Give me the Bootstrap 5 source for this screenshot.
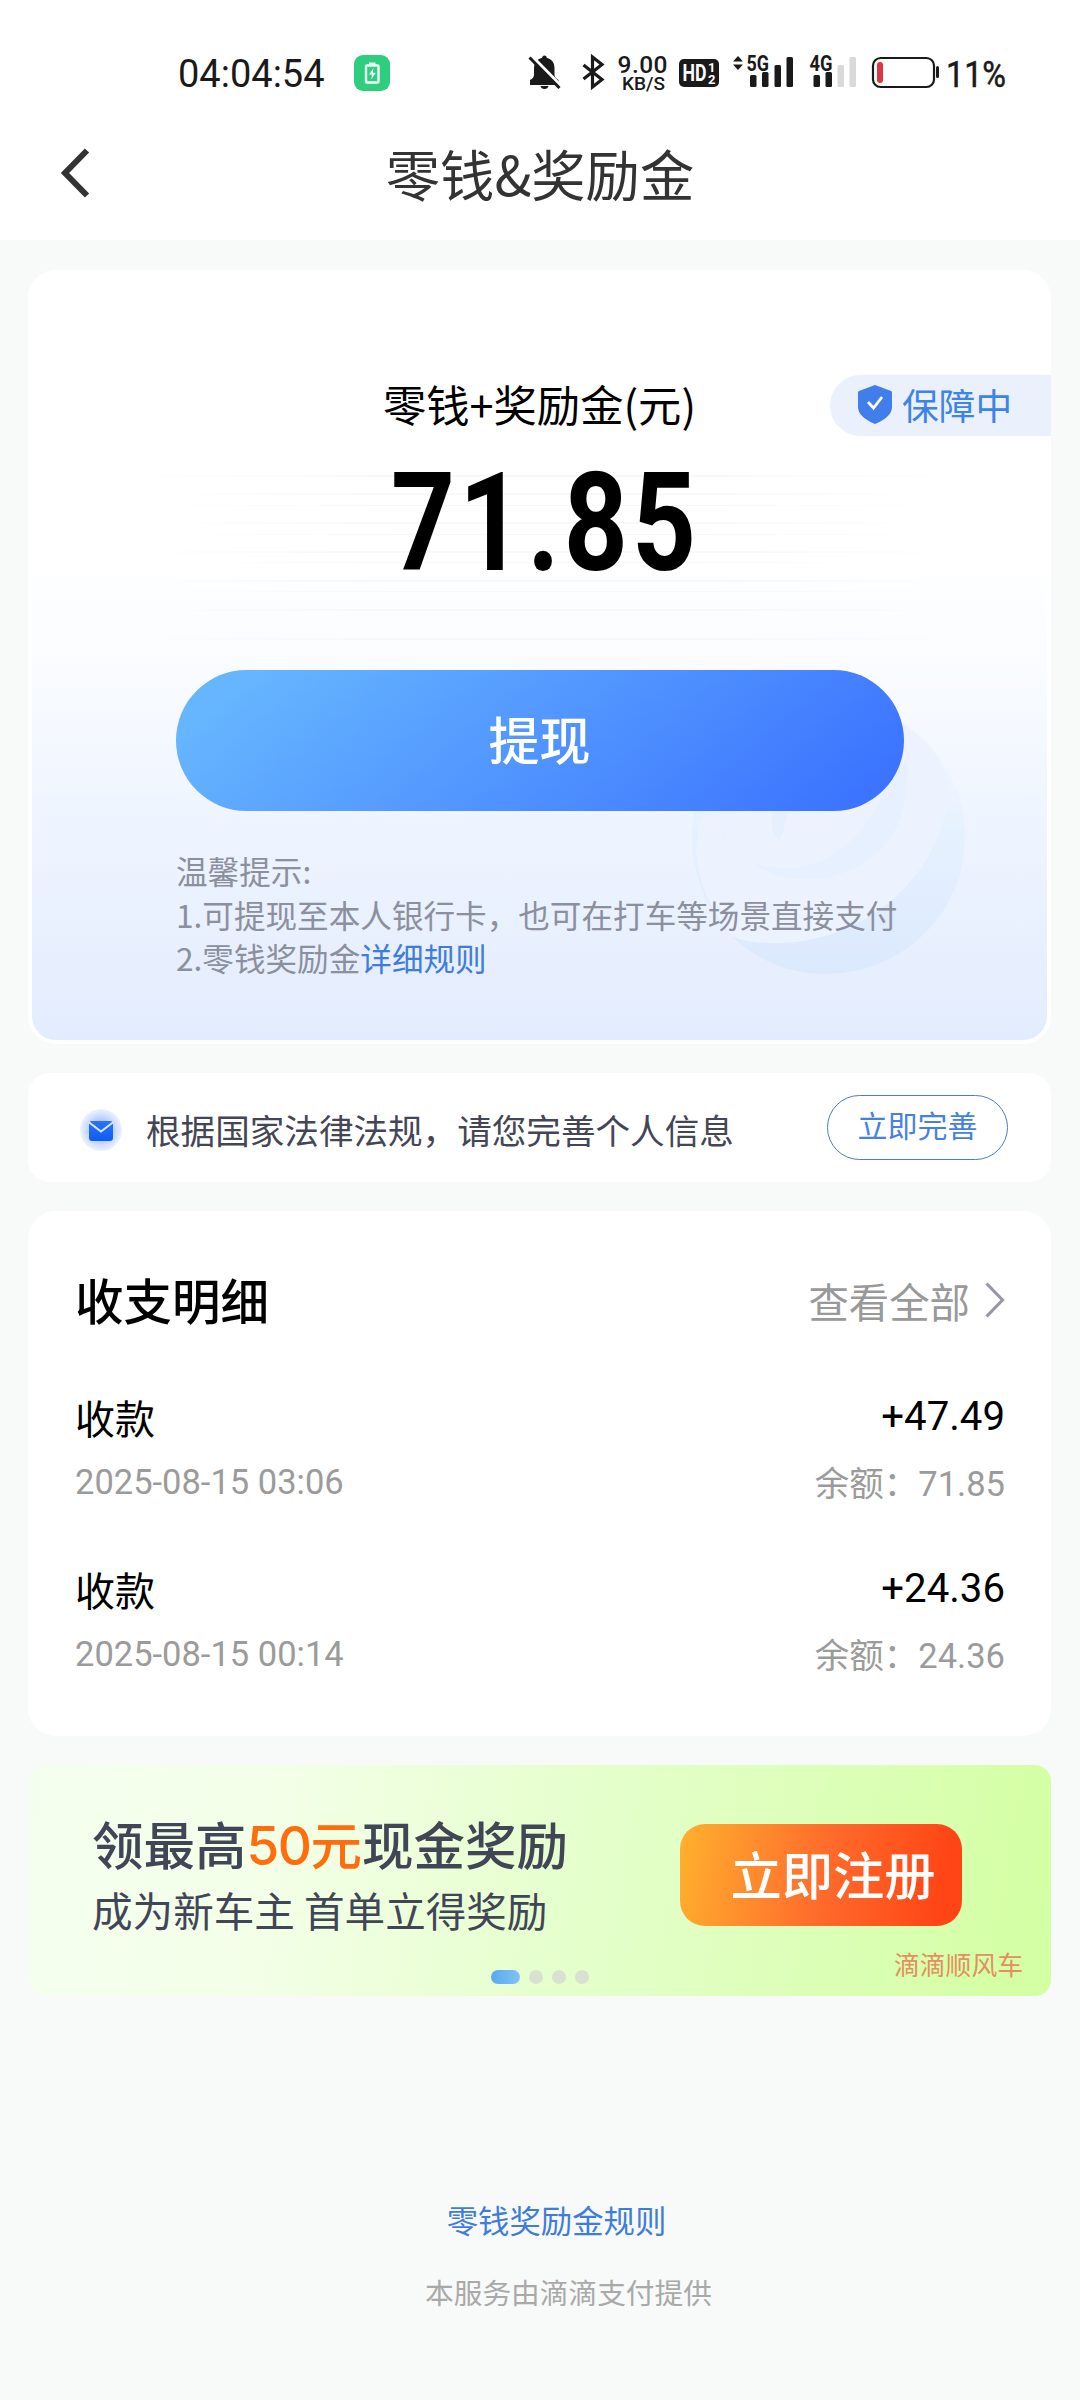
<!DOCTYPE html>
<html lang="zh-CN">
<head>
<meta charset="utf-8">
<meta name="viewport" content="width=device-width, initial-scale=1">
<title>零钱&amp;奖励金</title>
<link href="https://cdn.jsdelivr.net/npm/bootstrap@5.3.0/dist/css/bootstrap.min.css" rel="stylesheet">
<style>
body{background:#f8faf9;font-family:"Noto Sans CJK SC",sans-serif;color:#000;width:1080px;height:2400px;overflow:hidden}
.latin{font-family:Roboto,"Noto Sans CJK SC",sans-serif}
.topbar{height:240px}
.statusline{height:64px;margin-top:41px;color:#1a1a1a}
.clock{font-size:38px;line-height:64px;margin-left:178px;width:176px;padding-top:1px}
.page-title{font-size:54.3px;line-height:80px;color:#333;padding-top:8px}
.titlebar{height:100px;margin-top:20px}
.panel{background:#fff;margin:0 29px 0 28px;border-radius:28px}
.balance{height:774px;margin-top:30px;padding-top:99px;border:4px solid #fff;
 background:linear-gradient(180deg,#fff 0,#fff 36%,#fafcff 50%,#eff5ff 70%,#e3ecfe 100%)}
.caption-line{font-size:43.3px;line-height:60px}
.sum{font-size:138px;line-height:120px;height:120px;margin-top:30px;font-weight:700;letter-spacing:5px}
.sum span{display:inline-block;transform:scaleX(.81);padding-left:14px}
.guard{right:-4px;top:101px;width:221px;height:61px;border-radius:31px 0 0 31px;background:#ebf0fd;color:#3c83ea;font-size:36.7px;padding-left:27px;line-height:58px}
.withdraw{width:728px;height:141px;margin-top:87px;border:0;border-radius:71px;font-size:51px;font-weight:500;line-height:1;padding:0 0 5px;color:#fff;background:linear-gradient(140deg,#66b6ff 8%,#3b72ff 95%)}
.tips{width:760px;margin:38px 0 0 144px;font-size:31.6px;line-height:43.5px;color:#8c8f9d}
.tips a,.rules{color:#407ddb;text-decoration:none}
.swirl{left:650px;top:390px}
.rays{left:100px;top:190px}
.notice{height:109px;margin-top:29px;border-radius:22px;padding:0 43px 0 52px;color:#444655;font-size:34.6px}
.notice-text{padding:4px 0 0 24px}
.finish{width:181px;height:65px;border:1.5px solid #4c7cc4;border-radius:33px;font-size:30px;color:#4481e6;line-height:1;padding:0 0 7px;margin-bottom:1px}
.ledger{height:525px;margin-top:29px;padding:58px 46px 0 47px}
.ledger-head{height:118px}
.ledger h2{font-size:48.5px;line-height:60px;font-weight:500}
.more{font-size:40.4px;line-height:60px;color:#999;padding-top:2px;margin-right:-3px}
.entry{height:172px}
.kind{font-size:40px;line-height:60px}
.amt{font-size:40.2px;line-height:60px}
.sub{font-size:34.5px;line-height:50px;color:#9b9b9b;margin-top:10px}
.amt+.sub{margin-top:12px}
.promo{height:231px;margin-top:29px;margin-left:30px;border-radius:16px;background:linear-gradient(100deg,#f4feee 0,#f4ffe9 22%,#e3ffc8 58%,#d3ffa2 100%);color:#414657}
.promo-copy{padding:48px 0 0 62px;width:650px}
.promo-head{font-size:51.5px;line-height:60px;font-weight:500}
.promo-head b{color:#ff6d0c;font-weight:500}
.promo-head b span{font-family:Inter,sans-serif;letter-spacing:-1.5px;font-size:53px}
.promo-sub{font-size:40.6px;line-height:60px;margin-top:4px}
.signup{width:282px;height:102px;margin-top:59px;border-radius:25px;font-size:51.3px;font-weight:500;color:#fff;border:0;line-height:1;padding:0 0 4px 24px;background:linear-gradient(100deg,#ffb12e 0,#ff6c2c 50%,#ff4515 92%)}
.brandtag{right:28px;top:181px;font-size:25.8px;line-height:36px;color:#e38f5f}
.pager{left:461px;top:205px;gap:9px}
.pager i{width:14px;height:14px;border-radius:7px;background:#d9e2d0}
.pager i:first-child{width:29px;background:linear-gradient(90deg,#58a8ef,#82c2f5)}
.rules{font-size:31.4px;line-height:44px;margin-left:33px}
.provider{font-size:28.7px;line-height:40px;color:#a9a9a9;margin:30px 0 0 57px}
.foot{margin-top:202px}
svg{display:block;flex:none}
</style>
</head>
<body>
<header class="topbar bg-white overflow-hidden">
 <div class="statusline d-flex latin">
  <div class="clock">04:04:54</div>
  <svg width="36" height="64" viewBox="354 41 36 64"><rect x="354" y="55" width="36" height="36" rx="9" fill="#2dce7d"/><rect x="366" y="65.500" width="12.500" height="17" rx="1" fill="none" stroke="#f2fff8" stroke-width="2.400"/><path d="M369 62.500h6.500v3H369z" fill="#f2fff8"/><path d="M373.500 68l-4.500 6.500h3l-.8 5 4.600-6.800h-3z" fill="#f2fff8"/></svg>
  <svg width="690" height="64" viewBox="390 41 690 64" fill="#1a1a1a">
   <path d="M544.500 55.500q2 0 2.300 2.200 7.700 2 7.700 10v7q0 3 4 5.300V85h-28.500v-5q4-2 4-5.300v-7q0-8 8-10 .5-2.200 2.500-2.200zM540.500 86h8q-.7 3-4 3t-4-3z"/>
   <path d="M531.500 56l30 30.500" stroke="#fff" stroke-width="3.400"/><path d="M529.500 57.500l30 30.500" stroke="#1a1a1a" stroke-width="3"/>
   <path d="M583.500 65l18.500 14.500-9.500 7.500V57l9.500 7.500-18.500 14.500" fill="none" stroke="#1a1a1a" stroke-width="3.200"/>
   <g font-family="Roboto" font-weight="500">
   <text x="617.500" y="73" font-size="24.500" textLength="50">9.00</text>
   <text x="622" y="90" font-size="18" textLength="43" lengthAdjust="spacingAndGlyphs">KB/S</text></g>
   <rect x="679" y="59" width="40" height="28" rx="5"/>
   <g fill="#fff" font-family="Roboto" font-weight="700"><text x="682.500" y="81" font-size="23" textLength="24" lengthAdjust="spacingAndGlyphs">HD</text><text x="708" y="72" font-size="13">1</text><text x="708" y="84" font-size="13">2</text></g>
   <path d="M733 61.500l5-5.500 5 5.500zM733 64.500h10l-5 5.500z"/>
   <g font-family="Roboto" font-weight="700" font-size="22.500"><text x="746.500" y="71" textLength="22.500" lengthAdjust="spacingAndGlyphs">5G</text><text x="809.500" y="71" textLength="23" lengthAdjust="spacingAndGlyphs">4G</text></g>
   <rect x="750" y="75" width="6.500" height="12" rx="1.500"/><rect x="762" y="72" width="6.500" height="15" rx="1.500"/><rect x="774.500" y="65" width="6.500" height="22" rx="1.500"/><rect x="786.500" y="57" width="6.500" height="30" rx="1.500"/>
   <rect x="813.500" y="75" width="6.500" height="12" rx="1.500"/><rect x="825.500" y="72" width="6.500" height="15" rx="1.500"/><g fill="#d9d9d9"><rect x="837.500" y="65" width="6.500" height="22" rx="1.500"/><rect x="849.500" y="57" width="6.500" height="30" rx="1.500"/></g>
   <rect x="873" y="58" width="61" height="29" rx="7.500" fill="none" stroke="#1a1a1a" stroke-width="2.200"/><rect x="936" y="66" width="3" height="12" rx="1.500"/><rect x="877" y="62" width="6" height="21" rx="3" fill="#dc3545"/>
   <text x="946" y="86.500" font-family="Roboto" font-size="36.500" textLength="60" lengthAdjust="spacingAndGlyphs" stroke="#1a1a1a" stroke-width=".5">11%</text>
  </svg>
 </div>
 <div class="titlebar position-relative d-flex justify-content-center">
  <svg class="position-absolute start-0 top-0" width="110" height="100" viewBox="0 125 110 100"><path d="M87 150.500L65 173l22 22.500" fill="none" stroke="#333" stroke-width="6"/></svg>
  <h1 class="page-title m-0 fw-normal">零钱&amp;奖励金</h1>
 </div>
</header>
<main>
 <section class="panel balance position-relative text-center">
  <svg class="rays position-absolute" width="830" height="190" viewBox="0 0 830 190"><defs><linearGradient id="ray"><stop stop-color="#f6f8fc" stop-opacity="0"/><stop offset=".3" stop-color="#f6f8fc"/><stop offset=".7" stop-color="#f6f8fc"/><stop offset="1" stop-color="#f6f8fc" stop-opacity="0"/></linearGradient></defs><g fill="url(#ray)"><rect y="11" width="830" height="2"/><rect x="40" y="29" width="750" height="2"/><rect y="41" width="830" height="1"/><rect x="30" y="58" width="760" height="2"/><rect x="20" y="70" width="800" height="1"/><rect y="87" width="830" height="2"/><rect x="50" y="98" width="700" height="1"/><rect y="116" width="830" height="2"/><rect x="30" y="127" width="780" height="1"/><rect y="145" width="830" height="2"/><rect y="174" width="830" height="2"/></g></svg>
  <svg class="swirl position-absolute" width="300" height="330" viewBox="682 664 300 330">
   <defs><linearGradient id="disc" x2="0" y2="1"><stop stop-color="#f4f8ff"/><stop offset=".45" stop-color="#e6f1ff"/><stop offset="1" stop-color="#dbe9fd"/></linearGradient></defs>
   <path d="M692 838Q692 800 705 780L895 718Q965 765 965 838C965 910 905 974 825 974C742 974 692 905 692 838z" fill="url(#disc)"/>
   <path d="M722 810Q735 760 790 730L900 722Q948 750 948 795C940 880 860 944 775 943Q745 943 732 936Q700 900 696 850 700 800 722 810z" fill="#ecf3ff"/>
   <path d="M725 790C715 850 735 895 768 905 728 890 718 840 725 790zM750 862C800 880 850 860 880 800L905 760Q912 780 900 820C880 870 810 900 750 862z" fill="#e6f0fe"/>
   <path d="M772 812q-2 24 8 28 4-10 8-28z" fill="#e5effd"/>
  </svg>
  <div class="caption-line position-relative">零钱+奖励金(元)</div>
  <div class="guard position-absolute d-flex"><svg class="me-2" width="37" height="61" viewBox="857 375 37 61"><path d="M875 385l16 6q1 0 1 2v14q0 10-17 17-17-7-17-17v-14q0-2 1-2z" fill="#427eeb"/><path d="M868 402l5.500 6 8.500-11" fill="none" stroke="#fff" stroke-width="2.800"/></svg><span>保障中</span></div>
  <div class="sum latin position-relative"><span>71.85</span></div>
  <button class="btn withdraw position-relative">提现</button>
  <div class="tips text-start position-relative">温馨提示:<br>1.可提现至本人银行卡，也可在打车等场景直接支付<br>2.零钱奖励金<a href="#">详细规则</a></div>
 </section>

 <section class="panel notice d-flex align-items-center">
  <svg class="mt-1" width="42" height="44" viewBox="80 1109 42 44"><defs><radialGradient id="halo"><stop offset=".4" stop-color="#a9c4ff"/><stop offset=".75" stop-color="#d3e0ff"/><stop offset="1" stop-color="#edf2ff"/></radialGradient><linearGradient id="env" x2="0" y2="1"><stop stop-color="#2b74f7"/><stop offset="1" stop-color="#0f5cf5"/></linearGradient></defs><circle cx="101" cy="1131" r="21" fill="url(#halo)"/><rect x="89" y="1122" width="24" height="20" rx="3" fill="url(#env)"/><path d="M88.500 1123l12.500 9.500 12.500-9.500" fill="none" stroke="#dce8ff" stroke-width="2"/></svg>
  <span class="notice-text flex-grow-1">根据国家法律法规，请您完善个人信息</span>
  <button class="btn finish">立即完善</button>
 </section>

 <section class="panel ledger">
  <div class="ledger-head d-flex justify-content-between">
   <h2 class="m-0">收支明细</h2>
   <div class="more d-flex">查看全部<svg width="38" height="60" viewBox="968 1272 38 60"><path d="M984.500 1284.500l16 16.500-16 16.500" fill="none" stroke="#9797a9" stroke-width="3.200"/></svg></div>
  </div>
  <div class="entry d-flex justify-content-between">
   <div><div class="kind">收款</div><div class="sub latin">2025-08-15 03:06</div></div>
   <div class="text-end"><div class="amt latin">+47.49</div><div class="sub latin">余额：71.85</div></div>
  </div>
  <div class="entry d-flex justify-content-between">
   <div><div class="kind">收款</div><div class="sub latin">2025-08-15 00:14</div></div>
   <div class="text-end"><div class="amt latin">+24.36</div><div class="sub latin">余额：24.36</div></div>
  </div>
 </section>

 <section class="panel promo position-relative d-flex">
  <div class="promo-copy"><div class="promo-head">领最高<b><span>50</span>元</b>现金奖励</div><div class="promo-sub">成为新车主 首单立得奖励</div></div>
  <button class="btn signup">立即注册</button>
  <div class="brandtag position-absolute">滴滴顺风车</div>
  <div class="pager position-absolute d-flex"><i></i><i></i><i></i><i></i></div>
 </section>
</main>
<footer class="foot d-flex flex-column align-items-center">
 <a class="rules" href="#">零钱奖励金规则</a>
 <div class="provider">本服务由滴滴支付提供</div>
</footer>
<script src="https://cdn.jsdelivr.net/npm/bootstrap@5.3.0/dist/js/bootstrap.bundle.min.js"></script>
</body>
</html>
